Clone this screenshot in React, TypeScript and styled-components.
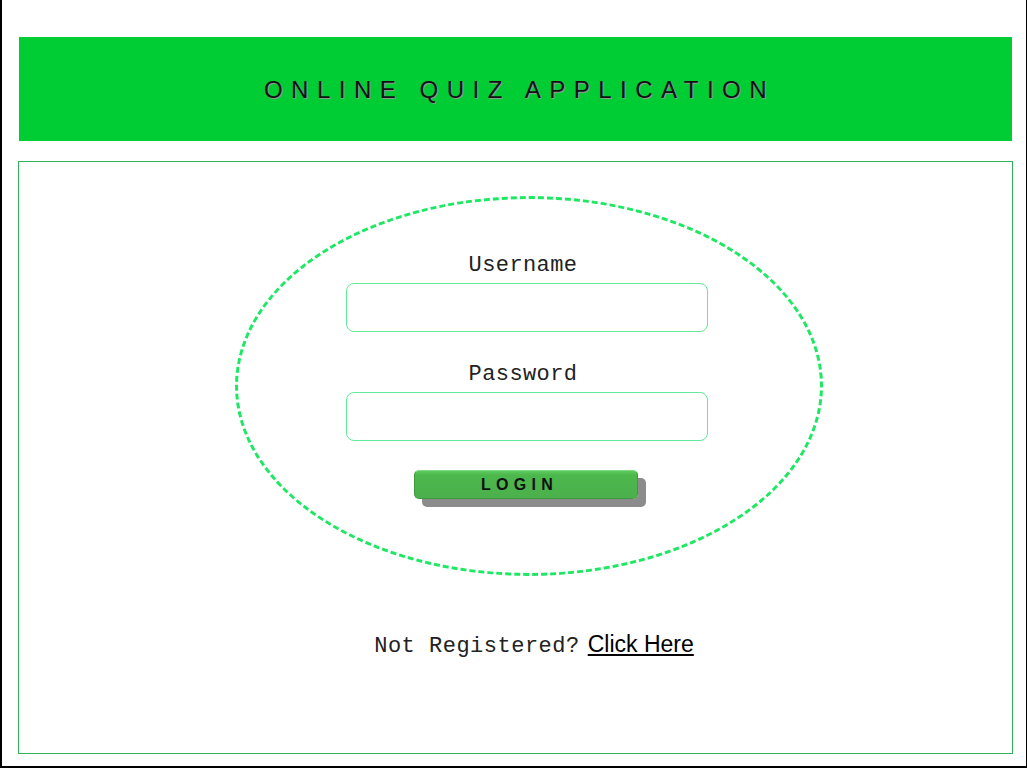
import React from "react";
import styled, { createGlobalStyle } from "styled-components";

const Global = createGlobalStyle`
  html, body { margin: 0; padding: 0; background: #fff; }
  body { width: 1027px; height: 768px; overflow: hidden; }
`;

const Page = styled.div`
  box-sizing: border-box;
  width: 1027px;
  height: 768px;
  border-left: 2px solid #000;
  border-right: 1px solid #000;
  border-bottom: 2px solid #000;
  padding-top: 37px;
`;

const Header = styled.header`
  margin: 0 14px 0 17px;
  height: 104px;
  background: #00cc33;
  display: flex;
  align-items: center;
  justify-content: center;
`;

const Title = styled.h1`
  margin: 2px 0 0;
  padding-left: 8px;
  font-family: "Liberation Sans", Arial, sans-serif;
  font-weight: normal;
  font-size: 24px;
  letter-spacing: 8.5px;
  color: #111;
  text-shadow: 1px 1px 1px #9a9a9a;
`;

const Main = styled.main`
  box-sizing: border-box;
  margin: 20px 13px 0 16px;
  height: 593px;
  border: 1px solid #33b25a;
  padding-left: 27px;
  display: flex;
  flex-direction: column;
  align-items: center;
`;

const Ellipse = styled.form`
  box-sizing: border-box;
  margin-top: 34px;
  width: 588px;
  height: 380px;
  border: 3px dashed #1ee863;
  border-radius: 50%;
  padding-top: 54px;
  display: flex;
  flex-direction: column;
  align-items: center;
`;

const Label = styled.label<{ $gap: number }>`
  display: block;
  margin-top: ${(p) => p.$gap}px;
  margin-left: -12px;
  font-family: "Liberation Mono", "Courier New", monospace;
  font-size: 22px;
  line-height: 26px;
  color: #222;
  letter-spacing: 0.4px;
`;

const Input = styled.input`
  box-sizing: border-box;
  margin-top: 4px;
  margin-left: -4px;
  width: 362px;
  height: 49px;
  border: 1px solid #62eb98;
  border-radius: 8px;
  background: #fff;
  outline: none;
`;

const Button = styled.button`
  box-sizing: border-box;
  margin-top: 29px;
  margin-left: -6px;
  width: 224px;
  height: 29px;
  padding: 0 13px 0 0;
  border: 1px solid #3e9a3e;
  border-top-color: #7fd87f;
  border-radius: 5px;
  background: linear-gradient(#5ccc5c 0, #4cb84c 4px, #4cb04c 100%);
  box-shadow: 8px 8px 0 #8c8c8c;
  font-family: "Liberation Sans", Arial, sans-serif;
  font-weight: bold;
  font-size: 16px;
  letter-spacing: 5.3px;
  color: #111;
  cursor: pointer;
`;

const Footer = styled.p`
  margin: 55px 0 0 10px;
  display: flex;
  align-items: baseline;
  gap: 8px;
  line-height: 26px;
`;

const Muted = styled.span`
  font-family: "Liberation Mono", "Courier New", monospace;
  font-size: 22px;
  color: #222;
  letter-spacing: 0.5px;
`;

const Link = styled.a`
  font-family: "Liberation Sans", Arial, sans-serif;
  font-size: 23px;
  color: #000;
  text-decoration: underline;
`;

export default function App() {
  return (
    <>
      <Global />
      <Page>
        <Header>
          <Title>ONLINE QUIZ APPLICATION</Title>
        </Header>
        <Main>
          <Ellipse onSubmit={(e) => e.preventDefault()}>
            <Label $gap={0}>Username</Label>
            <Input type="text" />
            <Label $gap={30}>Password</Label>
            <Input type="password" />
            <Button type="submit">LOGIN</Button>
          </Ellipse>
          <Footer>
            <Muted>Not Registered?</Muted>
            <Link href="#">Click Here</Link>
          </Footer>
        </Main>
      </Page>
    </>
  );
}
